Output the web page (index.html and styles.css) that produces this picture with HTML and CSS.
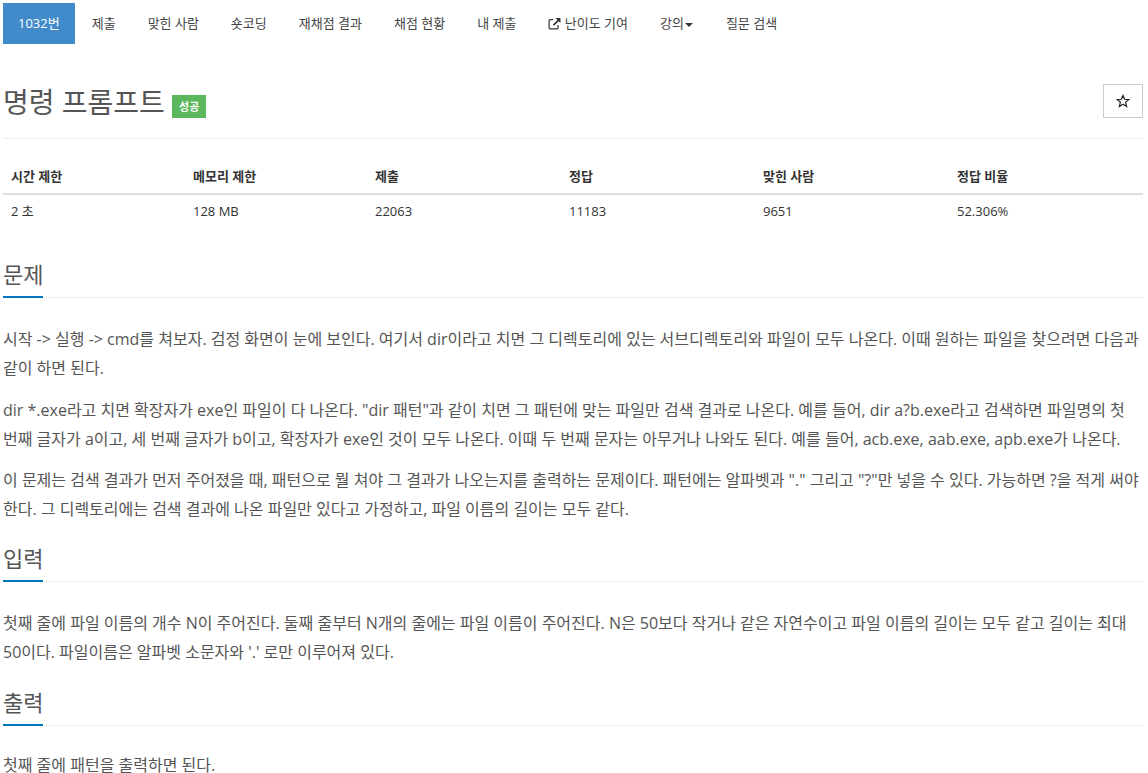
FILE: index.html
```html
<!DOCTYPE html>
<html lang="ko">
<head>
    <meta charset="UTF-8">
    <title>명령 프롬프트</title>
    <link rel="stylesheet" href="styles.css">
</head>
<body>
    <div class="wrapper">
        <ul class="tabs">
            <li class="active"><a href="#">1032번</a></li>
            <li><a href="#">제출</a></li>
            <li><a href="#">맞힌 사람</a></li>
            <li><a href="#">숏코딩</a></li>
            <li><a href="#">재채점 결과</a></li>
            <li><a href="#">채점 현황</a></li>
            <li><a href="#">내 제출</a></li>
            <li><a href="#"><svg class="ext" viewBox="0 0 14 14" width="13" height="13"><path d="M5.5 2.8H2.4a1.2 1.2 0 0 0-1.2 1.2v7.6a1.2 1.2 0 0 0 1.2 1.2h7.2a1.2 1.2 0 0 0 1.2-1.2V8.5" fill="none" stroke="#333" stroke-width="1.3"/><path d="M8 1h5.4v5.4l-1.9-1.9-5 5-1.3-1.3 5-5z" fill="#333"/></svg> 난이도 기여</a></li>
            <li><a href="#">강의<span class="caret"></span></a></li>
            <li><a href="#">질문 검색</a></li>
        </ul>

        <div class="page-header">
            <h1>명령 프롬프트 <span class="label">성공</span></h1>
            <button class="star"><svg viewBox="0 0 14 14" width="14" height="14"><path d="M7 1.4l1.6 3.9 4.2.3-3.2 2.7 1 4.1L7 10.2l-3.6 2.2 1-4.1-3.2-2.7 4.2-.3z" fill="none" stroke="#222" stroke-width="1.2"/></svg></button>
        </div>

        <table class="info">
            <thead>
                <tr><th class="c1">시간 제한</th><th class="c2">메모리 제한</th><th class="c3">제출</th><th class="c4">정답</th><th class="c5">맞힌 사람</th><th>정답 비율</th></tr>
            </thead>
            <tbody>
                <tr><td>2 초</td><td>128 MB</td><td>22063</td><td>11183</td><td>9651</td><td>52.306%</td></tr>
            </tbody>
        </table>

        <section>
            <div class="headline"><h2>문제</h2></div>
            <p>시작 -&gt; 실행 -&gt; cmd를 쳐보자. 검정 화면이 눈에 보인다. 여기서 dir이라고 치면 그 디렉토리에 있는 서브디렉토리와 파일이 모두 나온다. 이때 원하는 파일을 찾으려면 다음과 같이 하면 된다.</p>
            <p>dir *.exe라고 치면 확장자가 exe인 파일이 다 나온다. "dir 패턴"과 같이 치면 그 패턴에 맞는 파일만 검색 결과로 나온다. 예를 들어, dir a?b.exe라고 검색하면 파일명의 첫 번째 글자가 a이고, 세 번째 글자가 b이고, 확장자가 exe인 것이 모두 나온다. 이때 두 번째 문자는 아무거나 나와도 된다. 예를 들어, acb.exe, aab.exe, apb.exe가 나온다.</p>
            <p>이 문제는 검색 결과가 먼저 주어졌을 때, 패턴으로 뭘 쳐야 그 결과가 나오는지를 출력하는 문제이다. 패턴에는 알파벳과 "." 그리고 "?"만 넣을 수 있다. 가능하면 ?을 적게 써야 한다. 그 디렉토리에는 검색 결과에 나온 파일만 있다고 가정하고, 파일 이름의 길이는 모두 같다.</p>
        </section>

        <section>
            <div class="headline"><h2>입력</h2></div>
            <p>첫째 줄에 파일 이름의 개수 N이 주어진다. 둘째 줄부터 N개의 줄에는 파일 이름이 주어진다. N은 50보다 작거나 같은 자연수이고 파일 이름의 길이는 모두 같고 길이는 최대 50이다. 파일이름은 알파벳 소문자와 '.' 로만 이루어져 있다.</p>
        </section>

        <section>
            <div class="headline"><h2>출력</h2></div>
            <p>첫째 줄에 패턴을 출력하면 된다.</p>
        </section>
    </div>
</body>
</html>
```

FILE: styles.css
```css
html, body {
    margin: 0;
    padding: 0;
    height: 100%;
    overflow: hidden;
}
body {
    background: #fff;
    color: #333;
    font-family: "Open Sans", "Noto Sans CJK KR", sans-serif;
    font-size: 13px;
    line-height: 1.43;
}
a {
    color: inherit;
    text-decoration: none;
}
.wrapper {
    padding: 3px 5px 0 3px;
}
.tabs {
    display: flex;
    gap: 2px;
    list-style: none;
    margin: 0;
    padding: 0;
}
.tabs a {
    display: block;
    padding: 0 15px;
    line-height: 41px;
    font-size: 13px;
    color: #444;
}
.tabs .active a {
    background: #428bca;
    color: #fff;
}
.ext {
    vertical-align: -2px;
}
.caret {
    display: inline-block;
    margin: 0 1px;
    vertical-align: middle;
    border-top: 4px solid #333;
    border-left: 4px solid transparent;
    border-right: 4px solid transparent;
}
.page-header {
    display: flex;
    justify-content: space-between;
    align-items: flex-start;
    margin-top: 40px;
    height: 54px;
    border-bottom: 1px solid #eee;
}
h1 {
    margin: 0;
    font-size: 28px;
    font-weight: 400;
    line-height: 36px;
    color: #555;
}
.label {
    display: inline-block;
    background: #5cb85c;
    color: #fff;
    font-size: 11px;
    font-weight: 700;
    padding: 0 7px;
    line-height: 23px;
    vertical-align: 2px;
}
.star {
    display: flex;
    align-items: center;
    justify-content: center;
    width: 40px;
    height: 34px;
    padding: 0;
    background: #fff;
    border: 1px solid #ccc;
}
.info {
    width: 100%;
    margin-top: 19px;
    border-collapse: collapse;
    font-size: 13px;
}
.info th {
    text-align: left;
    padding: 9px 8px 7px;
    border-bottom: 2px solid #ddd;
    font-weight: 700;
}
.info td {
    text-align: left;
    padding: 7px 8px 9px;
}
.info .c1 { width: 166px; }
.info .c2 { width: 166px; }
.info .c3 { width: 178px; }
.info .c4, .info .c5 { width: 178px; }
.headline {
    margin-top: 28px;
    border-bottom: 1px dotted #ddd;
}
section + section .headline {
    margin-top: 17.5px;
}
.headline h2 {
    display: block;
    width: 40px;
    margin: 0 0 -1px;
    padding-bottom: 5px;
    font-size: 22px;
    font-weight: 400;
    line-height: 34px;
    white-space: nowrap;
    color: #555;
    border-bottom: 2px solid #0076c0;
}
section p {
    margin: 0 0 13px;
    font-size: 16px;
    line-height: 28.8px;
    color: #555;
}
section p:last-child {
    margin-bottom: 0;
}
.headline + p {
    margin-top: 27px;
}
/* last line sits right on the window edge */
section:last-child .headline + p {
    margin-top: 25px;
}
```
